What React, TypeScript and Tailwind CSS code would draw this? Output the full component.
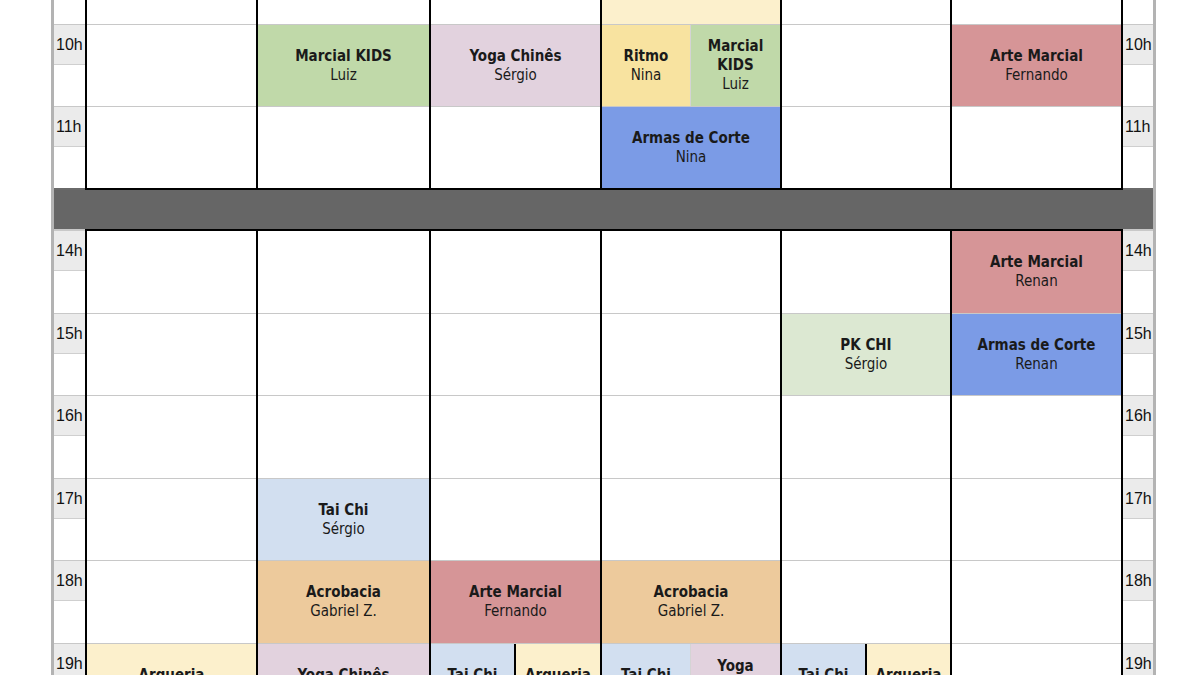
import React from "react";

type Ev = { t: string; n?: string; bg: string };
type Cell = null | Ev | { split: [Ev, Ev]; hard?: boolean; w: string };

const GREEN = "bg-[#c0d9a9]";
const LILAC = "bg-[#e2d2de]";
const YELLOW = "bg-[#f8e3a0]";
const RED = "bg-[#d69597]";
const BLUE = "bg-[#7b9be6]";
const PALEGREEN = "bg-[#dce8d2]";
const PALEBLUE = "bg-[#d2dff0]";
const ORANGE = "bg-[#edca9c]";
const CREAM = "bg-[#fcf0cc]";

const cols = ["w-[169px]", "w-[173px]", "w-[171px]", "w-[180px]", "w-[170px]", "w-[171px]"];

type Row = { label?: string; h: string; first?: boolean; cells: Cell[] };

const morning: Row[] = [
  { h: "h-[24px]", first: true, cells: [null, null, null, { t: "", bg: CREAM }, null, null] },
  {
    label: "10h",
    h: "h-[82px]",
    cells: [
      null,
      { t: "Marcial KIDS", n: "Luiz", bg: GREEN },
      { t: "Yoga Chinês", n: "Sérgio", bg: LILAC },
      { split: [{ t: "Ritmo", n: "Nina", bg: YELLOW }, { t: "Marcial KIDS", n: "Luiz", bg: GREEN }], w: "w-[88px]" },
      null,
      { t: "Arte Marcial", n: "Fernando", bg: RED },
    ],
  },
  {
    label: "11h",
    h: "h-[82px]",
    cells: [null, null, null, { t: "Armas de Corte", n: "Nina", bg: BLUE }, null, null],
  },
];

const afternoon: Row[] = [
  { label: "14h", h: "h-[82px]", first: true, cells: [null, null, null, null, null, { t: "Arte Marcial", n: "Renan", bg: RED }] },
  {
    label: "15h",
    h: "h-[82px]",
    cells: [null, null, null, null, { t: "PK CHI", n: "Sérgio", bg: PALEGREEN }, { t: "Armas de Corte", n: "Renan", bg: BLUE }],
  },
  { label: "16h", h: "h-[83px]", cells: [null, null, null, null, null, null] },
  { label: "17h", h: "h-[82px]", cells: [null, { t: "Tai Chi", n: "Sérgio", bg: PALEBLUE }, null, null, null, null] },
  {
    label: "18h",
    h: "h-[83px]",
    cells: [
      null,
      { t: "Acrobacia", n: "Gabriel Z.", bg: ORANGE },
      { t: "Arte Marcial", n: "Fernando", bg: RED },
      { t: "Acrobacia", n: "Gabriel Z.", bg: ORANGE },
      null,
      null,
    ],
  },
  {
    label: "19h",
    h: "h-[83px]",
    cells: [
      { t: "Arqueria", n: "Ana", bg: CREAM },
      { t: "Yoga Chinês", n: "Sérgio", bg: LILAC },
      { split: [{ t: "Tai Chi", n: "Sérgio", bg: PALEBLUE }, { t: "Arqueria", n: "Ana", bg: CREAM }], hard: true, w: "w-[83px]" },
      { split: [{ t: "Tai Chi", n: "Sérgio", bg: PALEBLUE }, { t: "Yoga Chinês", n: "Sérgio", bg: LILAC }], w: "w-[88px]" },
      { split: [{ t: "Tai Chi", n: "Sérgio", bg: PALEBLUE }, { t: "Arqueria", n: "Ana", bg: CREAM }], hard: true, w: "w-[83px]" },
      null,
    ],
  },
];

function Event({ ev, className = "" }: { ev: Ev; className?: string }) {
  return (
    <div className={`${ev.bg} ${className} h-full flex flex-col items-center justify-center text-center leading-[19px] text-[15px] text-[#1a1a1a] px-1`}>
      {ev.t && <span className="font-bold">{ev.t}</span>}
      {ev.n && <span>{ev.n}</span>}
    </div>
  );
}

function DayCell({ cell }: { cell: Cell }) {
  if (!cell) return <div className="h-full bg-white" />;
  if ("split" in cell) {
    return (
      <div className="h-full flex">
        <Event ev={cell.split[0]} className={`${cell.w} shrink-0`} />
        <div className={cell.hard ? "w-[2px] bg-black" : "w-px bg-[#d4d4d4]"} />
        <Event ev={cell.split[1]} className="flex-1" />
      </div>
    );
  }
  return <Event ev={cell} />;
}

function TimeCol({ rows, w }: { rows: Row[]; w: string }) {
  return (
    <div className={`${w} flex flex-col`}>
      {rows.map((r, i) => (
        <div key={i} className={`${r.h} flex flex-col ${r.first ? "" : "border-t border-[#c8c8c8]"}`}>
          {r.label && (
            <div className="h-[40px] bg-[#ebebeb] border-b border-[#cfcfcf] flex items-center pl-[2px] text-[16px] text-[#111] font-['Liberation_Sans',sans-serif]">
              {r.label}
            </div>
          )}
          <div className="flex-1 bg-white" />
        </div>
      ))}
    </div>
  );
}

function Section({ rows, edge }: { rows: Row[]; edge: "top" | "bottom" }) {
  return (
    <div className="flex">
      <div className={edge === "bottom" ? "border-b-2 border-[#6a6a6a]" : "border-t-2 border-[#c8c8c8]"}>
        <TimeCol rows={rows} w="w-[31px]" />
      </div>
      <div className={`flex border-x-2 border-black ${edge === "bottom" ? "border-b-2" : "border-t-2"}`}>
        {cols.map((cw, c) => (
          <div key={c} className={`${cw} flex flex-col ${c > 0 ? "border-l-2 border-black" : ""}`}>
            {rows.map((r, i) => (
              <div key={i} className={`${r.h} ${r.first ? "" : "border-t border-[#c8c8c8]"}`}>
                <DayCell cell={r.cells[c]} />
              </div>
            ))}
          </div>
        ))}
      </div>
      <div className={edge === "bottom" ? "border-b-2 border-[#6a6a6a]" : "border-t-2 border-[#c8c8c8]"}>
        <TimeCol rows={rows} w="w-[30px]" />
      </div>
    </div>
  );
}

export default function App() {
  return (
    <div className="h-[675px] w-[1200px] overflow-hidden bg-white font-['DejaVu_Sans_Condensed','DejaVu_Sans',sans-serif]">
      <div className="ml-[51px] w-[1105px] border-x-[3px] border-[#b3b3b3]">
        {/* Morning */}
        <Section rows={morning} edge="bottom" />

        {/* Lunch break */}
        <div className="h-[39px] bg-[#666666]" />

        {/* Afternoon */}
        <Section rows={afternoon} edge="top" />
      </div>
    </div>
  );
}
